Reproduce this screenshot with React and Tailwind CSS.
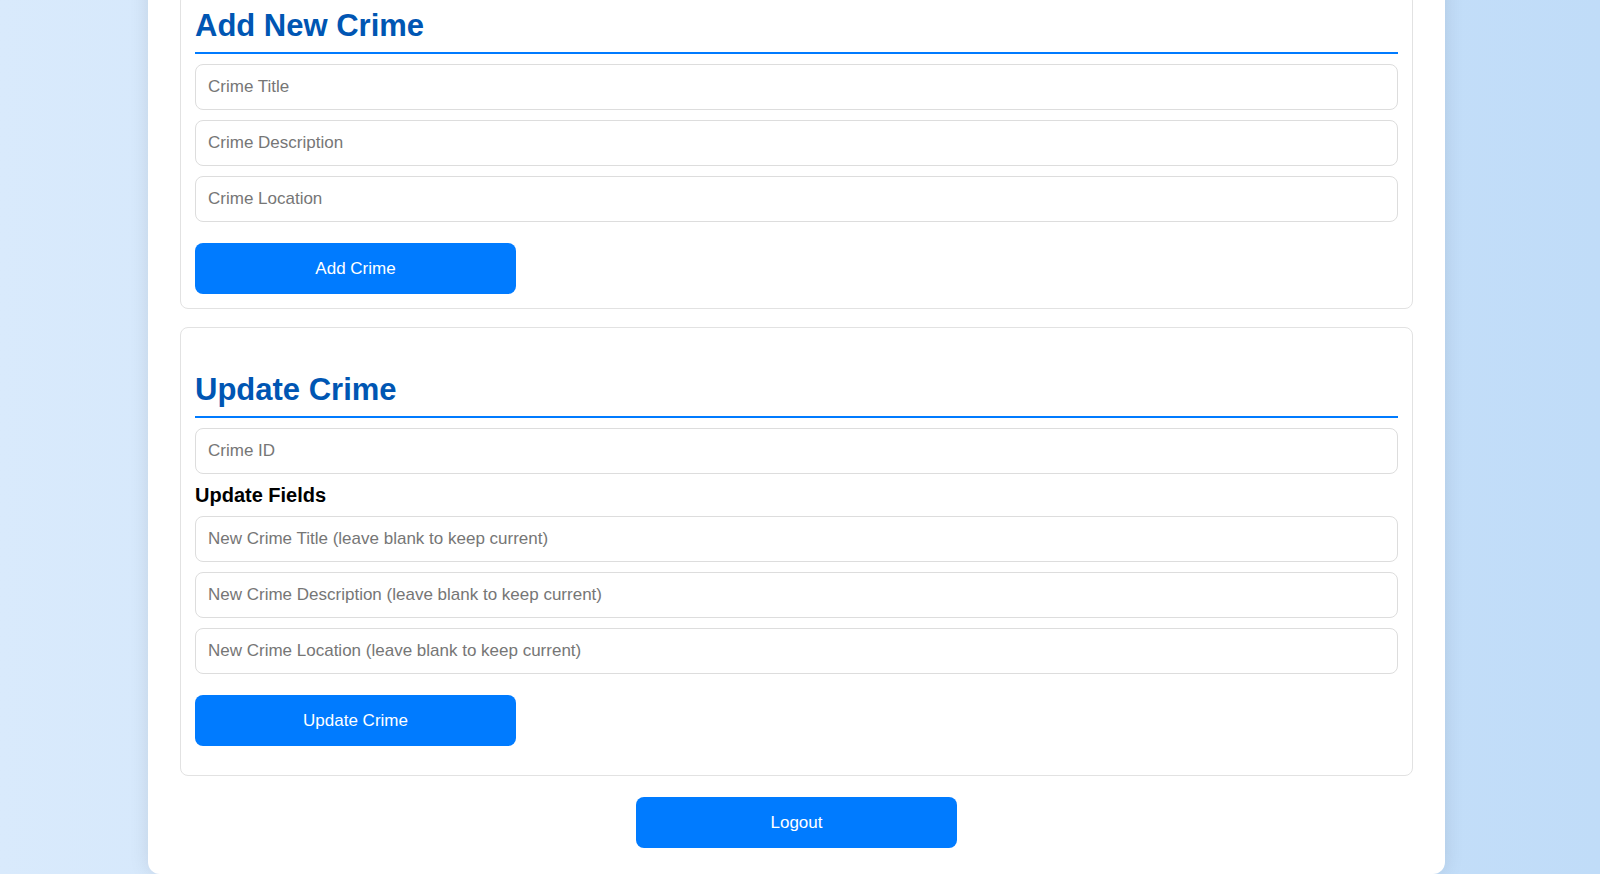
import React, { useState } from "react";

const fieldClass =
  "w-full h-[46px] px-[12px] border border-[#dddddd] rounded-[8px] bg-white text-[17px] text-[#222] placeholder:text-[#767676] outline-none focus:border-[#007bff]";

const btnClass =
  "w-[321px] h-[51px] rounded-[8px] bg-[#007bff] hover:bg-[#0069d9] text-white text-[17px] cursor-pointer";

const SectionTitle = ({ children }) => (
  <h2 className="text-[31px] leading-[36px] font-bold text-[#0056b3] border-b-2 border-[#007bff] pb-[8px]">
    {children}
  </h2>
);

const App = () => {
  const [crime, setCrime] = useState({ title: "", description: "", location: "" });
  const [update, setUpdate] = useState({ id: "", title: "", description: "", location: "" });

  const handleAdd = (e) => {
    e.preventDefault();
    setCrime({ title: "", description: "", location: "" });
  };

  const handleUpdate = (e) => {
    e.preventDefault();
    setUpdate({ id: "", title: "", description: "", location: "" });
  };

  return (
    <div
      className="min-h-screen overflow-hidden bg-linear-to-r from-[#d9eafc] to-[#c0dcf8]"
      style={{ fontFamily: '"Liberation Sans", Arial, sans-serif' }}
    >
      <div className="ml-[148px] -mt-[37px] w-[1297px] bg-white rounded-[12px] shadow-[0_0_20px_rgba(0,0,0,0.1)] pt-[30px] pb-[26px] px-[32px] flex flex-col">
        {/* Add crime */}
        <form
          onSubmit={handleAdd}
          className="border border-[#e2e2e2] rounded-[8px] px-[14px] pt-[14px] pb-[14px] flex flex-col"
        >
          <SectionTitle>Add New Crime</SectionTitle>
          <div className="mt-[10px] flex flex-col gap-[10px]">
            <input
              className={fieldClass}
              placeholder="Crime Title"
              value={crime.title}
              onChange={(e) => setCrime({ ...crime, title: e.target.value })}
            />
            <input
              className={fieldClass}
              placeholder="Crime Description"
              value={crime.description}
              onChange={(e) => setCrime({ ...crime, description: e.target.value })}
            />
            <input
              className={fieldClass}
              placeholder="Crime Location"
              value={crime.location}
              onChange={(e) => setCrime({ ...crime, location: e.target.value })}
            />
          </div>
          <button type="submit" className={`${btnClass} mt-[21px]`}>
            Add Crime
          </button>
        </form>

        {/* Update crime */}
        <form
          onSubmit={handleUpdate}
          className="mt-[18px] border border-[#e2e2e2] rounded-[8px] px-[14px] pt-[44px] pb-[29px] flex flex-col"
        >
          <SectionTitle>Update Crime</SectionTitle>
          <input
            className={`${fieldClass} mt-[10px]`}
            placeholder="Crime ID"
            value={update.id}
            onChange={(e) => setUpdate({ ...update, id: e.target.value })}
          />
          <h3 className="mt-[10px] mb-[9px] text-[20px] leading-[23px] font-bold text-black">
            Update Fields
          </h3>
          <div className="flex flex-col gap-[10px]">
            <input
              className={fieldClass}
              placeholder="New Crime Title (leave blank to keep current)"
              value={update.title}
              onChange={(e) => setUpdate({ ...update, title: e.target.value })}
            />
            <input
              className={fieldClass}
              placeholder="New Crime Description (leave blank to keep current)"
              value={update.description}
              onChange={(e) => setUpdate({ ...update, description: e.target.value })}
            />
            <input
              className={fieldClass}
              placeholder="New Crime Location (leave blank to keep current)"
              value={update.location}
              onChange={(e) => setUpdate({ ...update, location: e.target.value })}
            />
          </div>
          <button type="submit" className={`${btnClass} mt-[21px]`}>
            Update Crime
          </button>
        </form>

        <button type="button" className={`${btnClass} mt-[21px] self-center`}>
          Logout
        </button>
      </div>
    </div>
  );
};

export default App;
